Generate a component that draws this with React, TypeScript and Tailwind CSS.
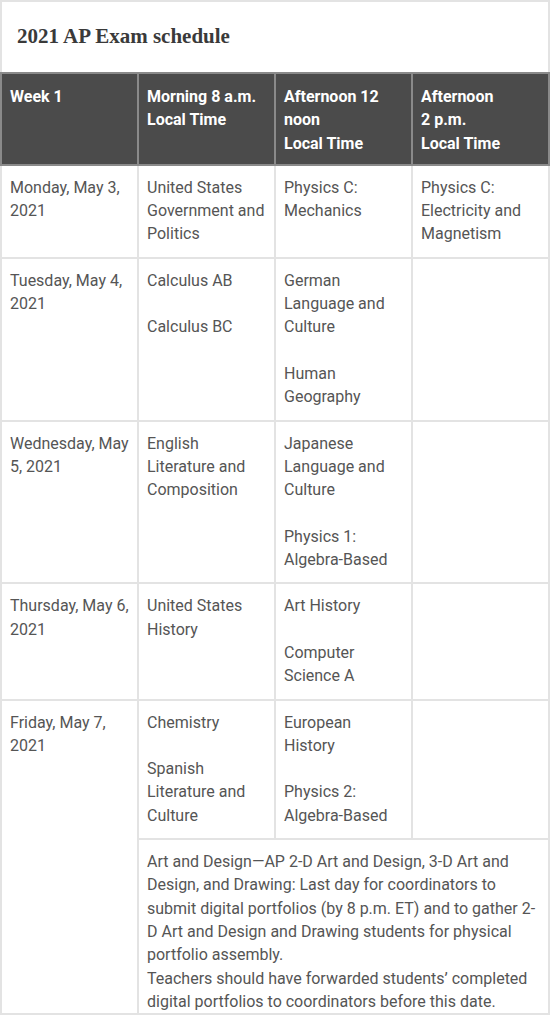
const header = [
  ["Week 1"],
  ["Morning 8 a.m.", "Local Time"],
  ["Afternoon 12 noon", "Local Time"],
  ["Afternoon", "2 p.m.", "Local Time"],
];

const rows = [
  {
    day: "Monday, May 3, 2021",
    cells: [
      ["United States Government and Politics"],
      ["Physics C: Mechanics"],
      ["Physics C: Electricity and Magnetism"],
    ],
  },
  {
    day: "Tuesday, May 4, 2021",
    cells: [
      ["Calculus AB", "Calculus BC"],
      ["German Language and Culture", "Human Geography"],
      [],
    ],
  },
  {
    day: "Wednesday, May 5, 2021",
    cells: [
      ["English Literature and Composition"],
      ["Japanese Language and Culture", "Physics 1: Algebra-Based"],
      [],
    ],
  },
  {
    day: "Thursday, May 6, 2021",
    cells: [
      ["United States History"],
      ["Art History", "Computer Science A"],
      [],
    ],
  },
];

const cell = "border-2 border-[#e3e3e3] px-2 pt-[10px] pb-[11px] align-top";

function Exams({ items }: { items: string[] }) {
  return (
    <>
      {items.map((it, i) => (
        <span key={i}>
          {i > 0 && (
            <>
              <br />
              <br />
            </>
          )}
          {it}
        </span>
      ))}
    </>
  );
}

export default function App() {
  return (
    <div className="w-[550px] h-[1017px] overflow-hidden bg-white font-['Roboto',sans-serif] text-[16px] leading-[23.3px] text-[#555]">
      <div className="border-2 border-b-0 border-[#e3e3e3] h-[72px] px-[15px] flex items-center">
        <h2 className="font-['Liberation_Serif',serif] font-bold text-[21px] text-[#3a3a3a] pb-[1px]">
          2021 AP Exam schedule
        </h2>
      </div>

      <table className="w-full table-fixed border-collapse">
        <thead>
          <tr className="bg-[#4b4b4b] text-white font-bold">
            {header.map((lines, i) => (
              <th
                key={i}
                className="w-1/4 border-2 border-[#8a8a8a] px-2 pt-[11px] pb-[9px] text-left align-top font-bold"
              >
                {lines.map((l, j) => (
                  <span key={j}>
                    {j > 0 && <br />}
                    {l}
                  </span>
                ))}
              </th>
            ))}
          </tr>
        </thead>
        <tbody>
          {rows.map((row) => (
            <tr key={row.day}>
              <td className={cell}>{row.day}</td>
              {row.cells.map((c, i) => (
                <td key={i} className={cell}>
                  <Exams items={c} />
                </td>
              ))}
            </tr>
          ))}

          {/* Friday has the portfolio note under it */}
          <tr>
            <td rowSpan={2} className={cell}>
              Friday, May 7, 2021
            </td>
            <td className={cell}>
              <Exams items={["Chemistry", "Spanish Literature and Culture"]} />
            </td>
            <td className={cell}>
              <Exams items={["European History", "Physics 2: Algebra-Based"]} />
            </td>
            <td className={cell}></td>
          </tr>
          <tr>
            <td colSpan={3} className="border-2 border-[#e3e3e3] px-2 pt-[10px] pb-0 align-top">
              Art and Design—AP 2-D Art and Design, 3-D Art and Design, and Drawing: Last day for
              coordinators to submit digital portfolios (by 8 p.m. ET) and to gather 2-D Art and
              Design and Drawing students for physical portfolio assembly.
              <br />
              Teachers should have forwarded students’ completed digital portfolios to coordinators
              before this date.
            </td>
          </tr>
        </tbody>
      </table>
    </div>
  );
}
